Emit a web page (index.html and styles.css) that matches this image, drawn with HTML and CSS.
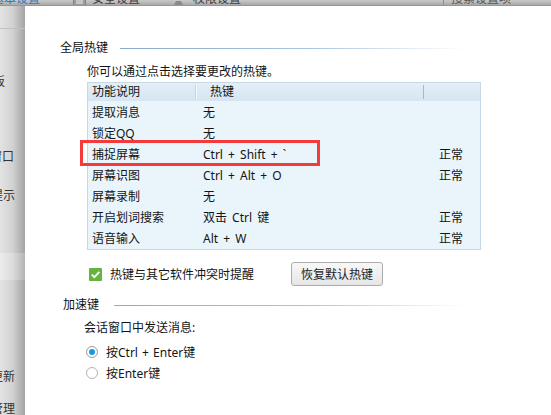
FILE: index.html
```html
<!DOCTYPE html>
<html lang="zh-CN">
<head>
<meta charset="utf-8">
<title>热键设置</title>
<link rel="stylesheet" href="styles.css">
</head>
<body>
<div class="app">
  <div class="tabs">
    <span class="tab tab-active">基本设置</span>
    <span class="tab-icon icon-shield"><svg width="13" height="14" viewBox="0 0 13 14"><rect x="0.5" y="0.5" width="12" height="13" rx="1" fill="#9c9c9c" stroke="#808080"/><rect x="3" y="3" width="7" height="8" fill="#c4c4c4"/></svg></span>
    <span class="tab tab-safe">安全设置</span>
    <span class="tab-icon icon-person"><svg width="13" height="14" viewBox="0 0 13 14"><circle cx="6.5" cy="4" r="3" fill="#8a8a8a"/><path d="M1 14 L4 8 L9 8 L12 14 Z" fill="#8a8a8a"/></svg></span>
    <span class="tab tab-perm">权限设置</span>
    <span class="search">搜索设置项</span>
  </div>
  <div class="main">
    <nav class="sidebar">
      <div class="side-head"></div>
      <div class="side-item item-panel">主面板</div>
      <div class="side-item item-chat">会话窗口</div>
      <div class="side-item item-tip">消息提示</div>
      <div class="side-current"></div>
      <div class="side-item item-update">软件更新</div>
      <div class="side-item item-file">文件管理</div>
    </nav>
    <main class="panel">
      <div class="group-title">
        <span>全局热键</span><i class="rule"></i>
      </div>
      <p class="hint">你可以通过点击选择要更改的热键。</p>
      <div class="table">
        <div class="thead">
          <span class="c1 h1">功能说明</span>
          <span class="c2 h2">热键</span>
          <span class="c3"></span>
        </div>
        <div class="tbody">
          <div class="row"><span class="c1">提取消息</span><span class="c2">无</span><span class="c3"></span></div>
          <div class="row"><span class="c1">锁定QQ</span><span class="c2">无</span><span class="c3"></span></div>
          <div class="row"><span class="c1">捕捉屏幕</span><span class="c2">Ctrl + Shift + `</span><span class="c3">正常</span></div>
          <div class="row"><span class="c1">屏幕识图</span><span class="c2">Ctrl + Alt + O</span><span class="c3">正常</span></div>
          <div class="row"><span class="c1">屏幕录制</span><span class="c2">无</span><span class="c3"></span></div>
          <div class="row"><span class="c1">开启划词搜索</span><span class="c2">双击 Ctrl 键</span><span class="c3">正常</span></div>
          <div class="row"><span class="c1">语音输入</span><span class="c2">Alt + W</span><span class="c3">正常</span></div>
        </div>
        <div class="highlight"></div>
      </div>
      <div class="check-row">
        <span class="checkbox"><svg width="13" height="13" viewBox="0 0 13 13"><rect width="13" height="13" rx="1" fill="#66b43f"/><polyline points="2.8,6.6 5.4,9.2 10.3,3.8" fill="none" stroke="#fff" stroke-width="1.8"/></svg></span>
        <span class="check-label">热键与其它软件冲突时提醒</span>
        <button class="btn">恢复默认热键</button>
      </div>
      <div class="group-title group-title-2">
        <span>加速键</span><i class="rule"></i>
      </div>
      <p class="sub-label">会话窗口中发送消息:</p>
      <div class="radio-row"><span class="radio radio-on"></span><span class="radio-label">按Ctrl + Enter键</span></div>
      <div class="radio-row"><span class="radio"></span><span class="radio-label">按Enter键</span></div>
    </main>
  </div>
</div>
</body>
</html>
```
FILE: styles.css
```css
* { box-sizing: border-box; margin: 0; padding: 0; }
html, body { width: 551px; height: 415px; overflow: hidden; }
body {
  font-family: "Noto Sans", "Noto Sans CJK SC", sans-serif;
  font-size: 12px;
  color: #141414;
  background: #fff;
}
.app { display: flex; flex-direction: column; height: 415px; }

/* top tab strip (mostly scrolled out of view) */
.tabs {
  height: 6px;
  flex: none;
  overflow: hidden;
  display: flex;
  align-items: flex-end;
  background: linear-gradient(#c9c9c9, #a9a9a9);
  border-bottom: 1px solid #969696;
  line-height: 16px;
  color: #3c3c3c;
  white-space: nowrap;
}
.tab, .search, .tab-icon { flex: none; margin-bottom: -2px; }
.tab-icon { display: flex; height: 14px; }
.tab-active { margin-left: -8px; color: #2b7bc2; }
.icon-shield { margin-left: 33px; }
.tab-safe { margin-left: 6px; }
.icon-person { margin-left: 32px; }
.tab-perm { margin-left: 8px; }
.search {
  margin-left: 202px;
  padding-left: 7px;
  border-left: 1px solid #8c8c8c;
  color: #555;
}

.main { flex: 1; display: flex; min-height: 0; }

/* left navigation (clipped) */
.sidebar {
  width: 25px;
  flex: none;
  overflow: hidden;
  display: flex;
  flex-direction: column;
  background: linear-gradient(to right, #e3e3e3, #d2d2d2 50%, #a4a4a4);
  color: #333;
}
.side-head { height: 23px; flex: none; border-bottom: 1px solid #c2c2c2; }
.side-item {
  flex: none;
  height: 20px;
  line-height: 20px;
  display: flex;
  justify-content: flex-end;
  padding-right: 10px;
  white-space: nowrap;
}
.item-panel { margin-top: 43px; padding-right: 20px; }
.item-chat { margin-top: 55px; padding-right: 11px; }
.item-tip { margin-top: 19px; }
.side-current {
  flex: none;
  height: 27px;
  margin-top: 47px;
  background: linear-gradient(to right, #ececec, #dcdcdc 50%, #b4b4b4);
}
.item-update { margin-top: 87px; }
.item-file { margin-top: 12px; }

/* main panel */
.panel {
  flex: 1;
  background: #fff;
  padding: 34px 70px 0 35px;
}
.group-title {
  display: flex;
  align-items: center;
  gap: 12px;
  line-height: 16px;
  margin-right: 14px;
  color: #111;
}
.group-title-2 { margin-top: 11px; margin-left: 3px; gap: 15px; }
.rule {
  flex: 1;
  height: 1px;
  background: linear-gradient(to right, #86aed0, #a9c5dd 55%, #ffffff);
}
.hint { margin: 8px 0 0 27px; line-height: 16px; }

.table {
  position: relative;
  margin: 2px 0 0 27px;
  width: 394px;
  border: 1px solid #c5d8e7;
  background: #eaf5fb;
}
.thead {
  display: flex;
  height: 18px;
  padding: 2px 0;
  background: linear-gradient(#e3eef8, #d5e5f1);
  line-height: 14px;
}
.c1 { width: 108px; flex: none; padding-left: 4px; white-space: nowrap; }
.c2 { width: 228px; flex: none; padding-left: 7px; white-space: nowrap; word-spacing: 2px; }
.c3 { flex: 1; padding-left: 15px; white-space: nowrap; }
.h1 { border-right: 1px solid #c3d3e1; box-shadow: 1px 0 0 #f5f9fc; }
.h2 { border-right: 1px solid #98bcda; padding-left: 14px; }
.tbody { padding-top: 1px; }
.row { display: flex; height: 21px; line-height: 21px; }
.highlight {
  position: absolute;
  left: -8px;
  top: 57px;
  width: 240px;
  height: 26px;
  border: 3px solid #f43a3a;
}

.check-row {
  display: flex;
  align-items: center;
  height: 24px;
  margin: 12px 0 0 29px;
}
.checkbox { display: flex; width: 13px; height: 13px; }
.check-label { margin-left: 8px; }
.btn {
  margin-left: 37px;
  width: 92px;
  height: 24px;
  border: 1px solid #acacac;
  border-radius: 3px;
  background: linear-gradient(#f8f8f8, #e6e6e6);
  font: inherit;
  color: #222;
}

.sub-label { margin: 7px 0 0 24px; line-height: 16px; }
.radio-row {
  display: flex;
  align-items: center;
  height: 21px;
  margin-left: 26px;
}
.sub-label + .radio-row { margin-top: 5px; }
.radio {
  width: 12px;
  height: 12px;
  border-radius: 50%;
  border: 1px solid #b3b3b3;
  background: #fff;
  display: flex;
  align-items: center;
  justify-content: center;
}
.radio-on { border-color: #9a9a9a; }
.radio-on::after {
  content: "";
  width: 6px;
  height: 6px;
  border-radius: 50%;
  background: #1a98ec;
}
.radio-label { margin-left: 8px; word-spacing: 1px; }
```
